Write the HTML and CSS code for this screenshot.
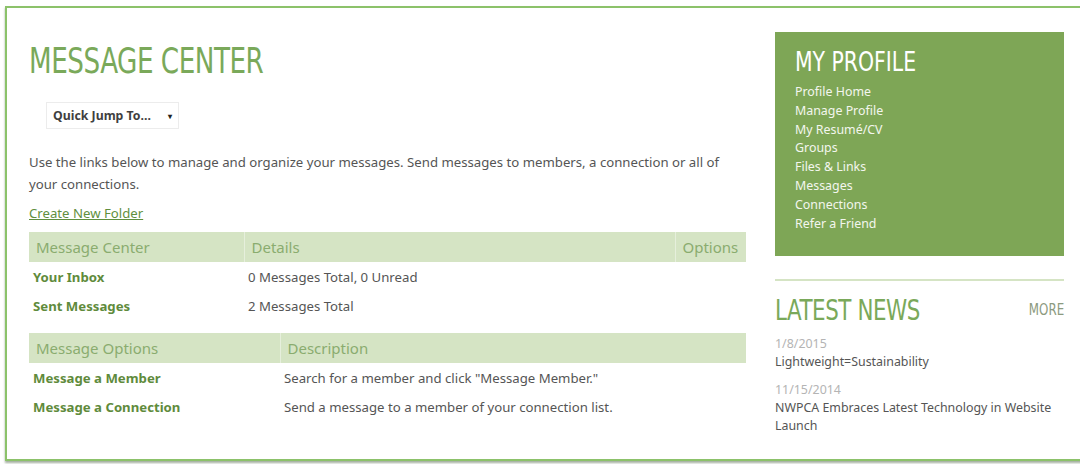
FILE: index.html
```html
<!DOCTYPE html>
<html lang="en">
<head>
<meta charset="utf-8">
<title>Message Center</title>
<link rel="stylesheet" href="styles.css">
</head>
<body>
<div class="frame">
  <main class="main">
    <h1 class="page-title"><span class="narrow">MESSAGE CENTER</span></h1>
    <div class="jump">
      <span class="jump-label">Quick Jump To...</span>
      <span class="jump-arrow">&#9662;</span>
    </div>
    <p class="intro">Use the links below to manage and organize your messages. Send messages to members, a connection or all of your connections.</p>
    <a class="create-link" href="#">Create New Folder</a>

    <table class="grid-table">
      <colgroup>
        <col class="c-215"><col class="c-431"><col class="c-71">
      </colgroup>
      <thead>
        <tr><th>Message Center</th><th>Details</th><th>Options</th></tr>
      </thead>
      <tbody>
        <tr><td><a href="#">Your Inbox</a></td><td>0 Messages Total, 0 Unread</td><td></td></tr>
        <tr><td><a href="#">Sent Messages</a></td><td>2 Messages Total</td><td></td></tr>
      </tbody>
    </table>

    <table class="grid-table">
      <colgroup>
        <col class="c-251"><col class="c-466">
      </colgroup>
      <thead>
        <tr><th>Message Options</th><th>Description</th></tr>
      </thead>
      <tbody>
        <tr><td><a href="#">Message a Member</a></td><td>Search for a member and click "Message Member."</td></tr>
        <tr><td><a href="#">Message a Connection</a></td><td>Send a message to a member of your connection list.</td></tr>
      </tbody>
    </table>
  </main>

  <aside class="side">
    <nav class="profile">
      <h2 class="profile-title"><span class="narrow">MY PROFILE</span></h2>
      <ul class="profile-links">
        <li><a href="#">Profile Home</a></li>
        <li><a href="#">Manage Profile</a></li>
        <li><a href="#">My Resumé/CV</a></li>
        <li><a href="#">Groups</a></li>
        <li><a href="#">Files &amp; Links</a></li>
        <li><a href="#">Messages</a></li>
        <li><a href="#">Connections</a></li>
        <li><a href="#">Refer a Friend</a></li>
      </ul>
    </nav>

    <section class="news">
      <div class="news-head">
        <h2 class="news-title"><span class="narrow">LATEST NEWS</span></h2>
        <a class="news-more" href="#"><span class="narrow narrow-right">MORE</span></a>
      </div>
      <div class="news-item">
        <div class="news-date">1/8/2015</div>
        <a class="news-link" href="#">Lightweight=Sustainability</a>
      </div>
      <div class="news-item">
        <div class="news-date">11/15/2014</div>
        <a class="news-link" href="#">NWPCA Embraces Latest Technology in Website Launch</a>
      </div>
    </section>
  </aside>
</div>
</body>
</html>
```

FILE: styles.css
```css
html, body {
  margin: 0;
  padding: 0;
  background: #ffffff;
  overflow: hidden;
}

body {
  font-family: "Noto Sans", "Open Sans", sans-serif;
  font-size: 13.2px;
  color: #555555;
  width: 1080px;
  height: 464px;
}

a {
  text-decoration: none;
  color: inherit;
}

/* condensed display type for headings */
.narrow {
  display: inline-block;
  font-family: "DejaVu Sans Condensed", "DejaVu Sans", sans-serif;
  font-stretch: condensed;
  font-weight: normal;
  transform: scaleX(0.81);
  transform-origin: left center;
  white-space: nowrap;
}

.narrow-right {
  transform-origin: right center;
}

/* outer page panel */
.frame {
  margin: 6px 0 0 5px;
  width: 1100px;
  height: 455px;
  box-sizing: border-box;
  border: 2px solid #8cc26a;
  border-right: none;
  box-shadow: 0 2px 2px rgba(90, 110, 80, 0.55);
  padding: 23px 0 0 22px;
  display: grid;
  grid-template-columns: 717px 289px;
  column-gap: 29px;
  align-items: start;
}

/* main column */
.page-title {
  margin: 9px 0 0;
  font-weight: normal;
  font-size: 36px;
  line-height: 40px;
  letter-spacing: -0.6px;
  color: #7aa95a;
}

.jump {
  margin: 21px 0 0 17px;
  width: 133px;
  height: 27px;
  box-sizing: border-box;
  border: 1px solid #ececec;
  display: flex;
  align-items: center;
  padding-left: 6px;
  font-weight: bold;
  font-size: 12.3px;
  color: #3f3f3f;
}

.jump-arrow {
  margin-left: 17px;
  font-size: 8px;
  color: #222;
}

.intro {
  margin: 22px 0 0;
  max-width: 700px;
  line-height: 22px;
  color: #555;
}

.create-link {
  display: inline-block;
  margin-top: 8px;
  color: #5f8f3e;
  text-decoration: underline;
  line-height: 20px;
}

.grid-table {
  width: 717px;
  border-collapse: collapse;
  table-layout: fixed;
  margin-top: 9px;
}

.grid-table + .grid-table {
  margin-top: 13px;
}

.c-215 { width: 215px; }
.c-431 { width: 431px; }
.c-71 { width: 71px; }
.c-251 { width: 251px; }
.c-466 { width: 466px; }

.grid-table th {
  background: #d5e4c4;
  color: #8aac6f;
  font-weight: normal;
  font-size: 15px;
  text-align: left;
  height: 30px;
  padding: 0 0 0 7px;
  border-left: 1px solid #e6efdc;
}

.grid-table th:first-child {
  border-left: none;
}

.grid-table td {
  height: 27px;
  padding: 1px 0 1px 4px;
  color: #555;
  white-space: nowrap;
}

.grid-table td a {
  font-weight: bold;
  color: #5f8b3c;
}

/* sidebar */
.profile {
  margin-top: 1px;
  background: #7ea656;
  height: 224px;
  box-sizing: border-box;
  padding: 13px 20px 0;
}

.profile-title {
  margin: 0;
  font-weight: normal;
  font-size: 27px;
  line-height: 32px;
  color: #ffffff;
}

.profile-title .narrow {
  transform: scaleX(0.84);
}

.profile-links {
  list-style: none;
  margin: 5px 0 0;
  padding: 0;
  font-size: 12.4px;
}

.profile-links li {
  line-height: 18.8px;
  color: #f3f6ee;
}

.news {
  margin-top: 23px;
  border-top: 2px solid #d5e4c4;
}

.news-head {
  display: flex;
  justify-content: space-between;
  align-items: center;
  margin-top: 11px;
}

.news-title {
  margin: 0;
  font-weight: normal;
  font-size: 29px;
  line-height: 34px;
  letter-spacing: -0.5px;
  color: #7aa95a;
}

.news-title .narrow {
  transform: scaleX(0.82);
}

.news-more {
  font-size: 16.5px;
  line-height: 20px;
  color: #8c9a80;
}

.news-more .narrow {
  transform: scaleX(0.8);
}

.news-item {
  margin-top: 8px;
  font-size: 12.4px;
}

.news-item + .news-item {
  margin-top: 10px;
}

.news-date {
  color: #b4b4b4;
  line-height: 18px;
}

.news-link {
  display: block;
  line-height: 18px;
  color: #555;
}
```
